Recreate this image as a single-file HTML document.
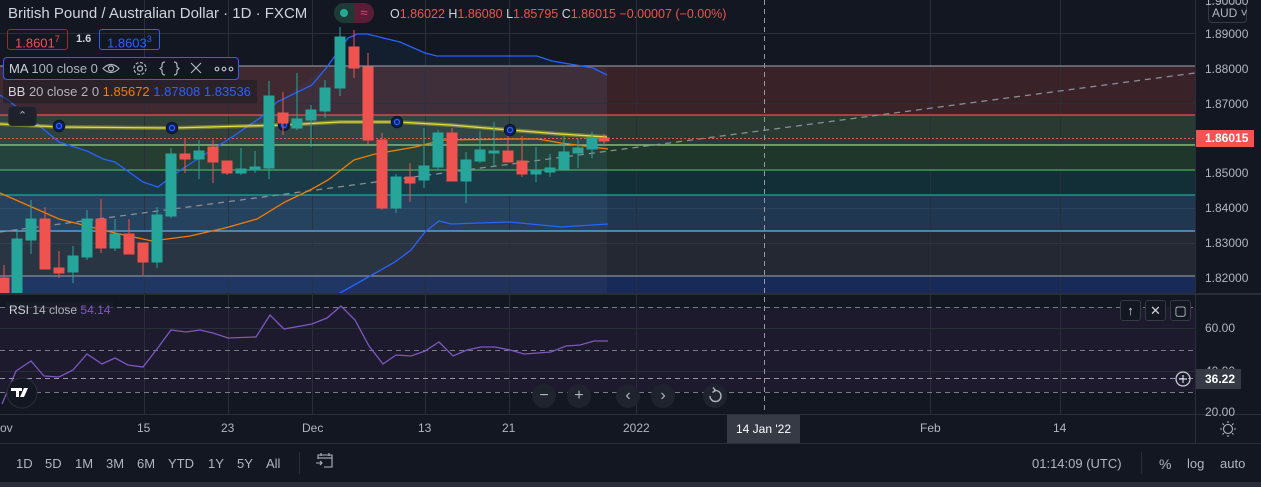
<!DOCTYPE html>
<html><head><meta charset="utf-8"><style>
*{margin:0;padding:0;box-sizing:border-box}
body{width:1261px;height:487px;background:#131722;overflow:hidden;position:relative;font-family:"Liberation Sans",sans-serif;color:#b2b5be}
.a{position:absolute;white-space:nowrap}
.pl{position:absolute;left:1205px;font-size:12px;color:#b2b5be}
.tl{position:absolute;top:421px;font-size:12px;color:#b2b5be}
.tb{position:absolute;top:456px;font-size:13px;color:#b2b5be}
.r{color:#ef5350}
.nb{position:absolute;top:384px;width:24px;height:24px;border-radius:50%;background:#1f232e;color:#b2b5be;font-size:16px;text-align:center;line-height:23px}
.sb{position:absolute;top:300px;width:21px;height:21px;border:1px solid #363a45;border-radius:3px;background:#131722;color:#d1d4dc;font-size:13px;text-align:center;line-height:19px}
</style></head><body>
<svg class="a" style="left:0;top:0" width="1261" height="487">
<rect x="0" y="66" width="1195" height="49" fill="#3a2229"/>
<rect x="0" y="115" width="1195" height="30" fill="#2a3a33"/>
<rect x="0" y="145" width="1195" height="25" fill="#1f372b"/>
<rect x="0" y="170" width="1195" height="25" fill="#122e36"/>
<rect x="0" y="195" width="1195" height="36" fill="#1f3750"/>
<rect x="0" y="231" width="1195" height="45" fill="#242832"/>
<rect x="0" y="276" width="1195" height="17" fill="#182a57"/>
<rect x="0" y="66" width="607" height="227" fill="rgba(255,255,255,0.035)"/>
<g stroke="#2a2e39" stroke-width="1">
<line x1="0" y1="33.5" x2="1195" y2="33.5"/><line x1="0" y1="103.5" x2="1195" y2="103.5"/><line x1="0" y1="208.5" x2="1195" y2="208.5" stroke="rgba(255,255,255,0.06)"/><line x1="0" y1="243.5" x2="1195" y2="243.5" stroke="rgba(255,255,255,0.06)"/>
<line x1="144.5" y1="0" x2="144.5" y2="414"/><line x1="228.5" y1="0" x2="228.5" y2="414"/><line x1="312.5" y1="0" x2="312.5" y2="414"/><line x1="425.5" y1="0" x2="425.5" y2="414"/><line x1="509.5" y1="0" x2="509.5" y2="414"/><line x1="636.5" y1="0" x2="636.5" y2="414"/><line x1="930.5" y1="0" x2="930.5" y2="414"/><line x1="1060.5" y1="0" x2="1060.5" y2="414"/>
</g>
<g stroke-width="1.3">
<line x1="0" y1="66" x2="1195" y2="66" stroke="#8a8d96"/>
<line x1="0" y1="115" x2="1195" y2="115" stroke="#e5534b"/>
<line x1="0" y1="145" x2="1195" y2="145" stroke="#9ad38a"/>
<line x1="0" y1="170" x2="1195" y2="170" stroke="#4caf50"/>
<line x1="0" y1="195" x2="1195" y2="195" stroke="#26a69a"/>
<line x1="0" y1="231" x2="1195" y2="231" stroke="#64b5f6"/>
<line x1="0" y1="276" x2="1195" y2="276" stroke="#8a8d96"/>
</g>
<polygon fill="rgba(33,150,243,0.06)" points="0,95 30,118 59,142 87,151 115,162 143,182 158,187 182,169 229,139 277,102 327,67 348,38 367,33 400,42 425,53 437,56 537,56 552,61 593,68 607,75 607,224 561,227 510,222 451,224 439,221 425,232 411,250 395,262 340,293 0,293"/>
<line x1="0" y1="232" x2="1195" y2="73" stroke="#8a8d96" stroke-width="1.3" stroke-dasharray="6,5"/>
<line x1="0" y1="138.5" x2="1195" y2="138.5" stroke="#ef5350" stroke-width="1" stroke-dasharray="2,2"/>
<polyline fill="none" stroke="#2962ff" stroke-width="1.3" points="0,95 8,100 30,118 59,142 87,151 103,159 115,162 143,182 158,187 182,169 229,139 260,118 277,102 312,85 327,67 337,53 348,38 357,34 367,34 400,42 425,53 437,56 537,56 552,61 593,68 607,75"/>
<polyline fill="none" stroke="#2962ff" stroke-width="1.3" points="320,302 340,293 395,262 411,250 425,232 439,221 451,224 510,222 561,227 608,224"/>
<polyline fill="none" stroke="#f57c00" stroke-width="1.3" points="0,193 59,219 79,224 115,233 152,241 190,236 225,228 257,219 285,202 312,189 328,180 354,160 375,154 415,147 443,140 514,139 538,139 561,143 608,149"/>
<polyline fill="none" stroke="rgba(230,220,60,0.35)" stroke-width="4" points="0,124 60,127 172,128 284,125 340,122 397,122 450,125 510,130 560,134 607,137"/>
<polyline fill="none" stroke="#e6dc3c" stroke-width="1.3" points="0,124 60,127 172,128 284,125 340,122 397,122 450,125 510,130 560,134 607,137"/>
<g fill="#0c1f6e" stroke="#131722" stroke-width="1.5"><circle cx="59" cy="126" r="5.5"/><circle cx="172" cy="128" r="5.5"/><circle cx="284" cy="125" r="5.5"/><circle cx="397" cy="122" r="5.5"/><circle cx="510" cy="130" r="5.5"/></g>
<g fill="none" stroke="#2962ff" stroke-width="1.2"><circle cx="59" cy="126" r="2.5"/><circle cx="172" cy="128" r="2.5"/><circle cx="284" cy="125" r="2.5"/><circle cx="397" cy="122" r="2.5"/><circle cx="510" cy="130" r="2.5"/></g>
<g stroke-width="1">
<g fill="#ef5350" stroke="#ef5350">
<line x1="4" y1="265" x2="4" y2="293"/><rect x="-1" y="278" width="10" height="15"/>
<line x1="45" y1="207" x2="45" y2="269"/><rect x="40" y="219" width="10" height="50"/>
<line x1="59" y1="251" x2="59" y2="278"/><rect x="54" y="268" width="10" height="5"/>
<line x1="101" y1="199" x2="101" y2="253"/><rect x="96" y="219" width="10" height="29"/>
<line x1="129" y1="219" x2="129" y2="254"/><rect x="124" y="234" width="10" height="20"/>
<line x1="143" y1="243" x2="143" y2="275"/><rect x="138" y="243" width="10" height="19"/>
<line x1="185" y1="139" x2="185" y2="173"/><rect x="180" y="154" width="10" height="5"/>
<line x1="213" y1="140" x2="213" y2="183"/><rect x="208" y="147" width="10" height="15"/>
<line x1="227" y1="161" x2="227" y2="175"/><rect x="222" y="161" width="10" height="12"/>
<line x1="283" y1="92" x2="283" y2="135"/><rect x="278" y="113" width="10" height="10"/>
<line x1="354" y1="30" x2="354" y2="78"/><rect x="349" y="47" width="10" height="21"/>
<line x1="368" y1="53" x2="368" y2="145"/><rect x="363" y="67" width="10" height="73"/>
<line x1="382" y1="133" x2="382" y2="210"/><rect x="377" y="140" width="10" height="68"/>
<line x1="410" y1="163" x2="410" y2="202"/><rect x="405" y="177" width="10" height="6"/>
<line x1="452" y1="128" x2="452" y2="181"/><rect x="447" y="133" width="10" height="48"/>
<line x1="508" y1="136" x2="508" y2="162"/><rect x="503" y="151" width="10" height="11"/>
<line x1="522" y1="136" x2="522" y2="177"/><rect x="517" y="161" width="10" height="13"/>
<line x1="604" y1="134" x2="604" y2="146"/><rect x="599" y="138" width="10" height="3"/>
</g>
<g fill="#26a69a" stroke="#26a69a">
<line x1="17" y1="229" x2="17" y2="293"/><rect x="12" y="239" width="10" height="54"/>
<line x1="31" y1="200" x2="31" y2="254"/><rect x="26" y="219" width="10" height="21"/>
<line x1="73" y1="246" x2="73" y2="283"/><rect x="68" y="256" width="10" height="16"/>
<line x1="87" y1="210" x2="87" y2="260"/><rect x="82" y="219" width="10" height="38"/>
<line x1="115" y1="219" x2="115" y2="251"/><rect x="110" y="234" width="10" height="14"/>
<line x1="157" y1="207" x2="157" y2="268"/><rect x="152" y="215" width="10" height="47"/>
<line x1="171" y1="148" x2="171" y2="218"/><rect x="166" y="154" width="10" height="62"/>
<line x1="199" y1="140" x2="199" y2="179"/><rect x="194" y="151" width="10" height="8"/>
<line x1="241" y1="148" x2="241" y2="175"/><rect x="236" y="169" width="10" height="4"/>
<line x1="255" y1="151" x2="255" y2="173"/><rect x="250" y="167" width="10" height="3"/>
<line x1="269" y1="81" x2="269" y2="179"/><rect x="264" y="96" width="10" height="72"/>
<line x1="297" y1="73" x2="297" y2="130"/><rect x="292" y="119" width="10" height="9"/>
<line x1="311" y1="105" x2="311" y2="147"/><rect x="306" y="110" width="10" height="10"/>
<line x1="325" y1="80" x2="325" y2="118"/><rect x="320" y="88" width="10" height="23"/>
<line x1="340" y1="27" x2="340" y2="96"/><rect x="335" y="37" width="10" height="51"/>
<line x1="396" y1="174" x2="396" y2="213"/><rect x="391" y="177" width="10" height="31"/>
<line x1="424" y1="128" x2="424" y2="188"/><rect x="419" y="166" width="10" height="14"/>
<line x1="438" y1="130" x2="438" y2="170"/><rect x="433" y="133" width="10" height="34"/>
<line x1="466" y1="152" x2="466" y2="203"/><rect x="461" y="160" width="10" height="21"/>
<line x1="480" y1="131" x2="480" y2="163"/><rect x="475" y="150" width="10" height="11"/>
<line x1="494" y1="122" x2="494" y2="167"/><rect x="489" y="151" width="10" height="2"/>
<line x1="536" y1="147" x2="536" y2="182"/><rect x="531" y="170" width="10" height="4"/>
<line x1="550" y1="154" x2="550" y2="177"/><rect x="545" y="168" width="10" height="4"/>
<line x1="564" y1="136" x2="564" y2="169"/><rect x="559" y="152" width="10" height="17"/>
<line x1="578" y1="139" x2="578" y2="168"/><rect x="573" y="148" width="10" height="5"/>
<line x1="592" y1="132" x2="592" y2="158"/><rect x="587" y="138" width="10" height="11"/>
</g></g>
<rect x="0" y="293" width="1261" height="2" fill="#2a2e39"/>
<rect x="0" y="295" width="1195" height="119" fill="#131722"/>
<rect x="0" y="307" width="1195" height="85" fill="#1c1a2c"/>
<g stroke="#2a2e39"><line x1="0" y1="328.5" x2="1195" y2="328.5"/><line x1="0" y1="371.5" x2="1195" y2="371.5"/>
<line x1="144.5" y1="295" x2="144.5" y2="414"/><line x1="228.5" y1="295" x2="228.5" y2="414"/><line x1="312.5" y1="295" x2="312.5" y2="414"/><line x1="425.5" y1="295" x2="425.5" y2="414"/><line x1="509.5" y1="295" x2="509.5" y2="414"/><line x1="636.5" y1="295" x2="636.5" y2="414"/><line x1="930.5" y1="295" x2="930.5" y2="414"/><line x1="1060.5" y1="295" x2="1060.5" y2="414"/></g>
<g stroke="#787b86" stroke-dasharray="5,4"><line x1="0" y1="307.5" x2="1195" y2="307.5"/><line x1="0" y1="350.5" x2="1195" y2="350.5"/><line x1="0" y1="392.5" x2="1195" y2="392.5"/></g>
<polyline fill="none" stroke="#7e57c2" stroke-width="1.3" points="2,404 16,371 31,361 44,376 59,377 73,370 87,354 102,364 115,358 128,365 143,367 157,349 171,330 186,332 200,330 213,333 228,338 256,337 270,315 284,329 312,324 327,318 341,306 355,320 369,346 383,364 396,355 411,356 425,351 439,342 453,356 467,350 481,347 495,347 510,350 524,354 538,353 551,352 566,346 580,345 594,341 608,341"/>
<line x1="764.5" y1="0" x2="764.5" y2="414" stroke="#9598a1" stroke-dasharray="5,4"/>
<line x1="0" y1="378.5" x2="1195" y2="378.5" stroke="#9598a1" stroke-dasharray="5,4"/>
<rect x="1195" y="0" width="1" height="443" fill="#2a2e39"/>
<rect x="0" y="414" width="1261" height="1" fill="#2a2e39"/>
<rect x="0" y="443" width="1261" height="1" fill="#2a2e39"/>
<rect x="0" y="482" width="1261" height="5" fill="#2a2e39"/>
<rect x="1141" y="452" width="1" height="22" fill="#2a2e39"/>
<rect x="299" y="452" width="1" height="22" fill="#2a2e39"/>
<circle cx="22" cy="393" r="15" fill="#131722" stroke="#2a2e39"/>
<path d="M11 388h8v9h-3v-6h-5z M19 388h3v3h-3z M24 388h4l-4 9h-4z" fill="#fff"/>
<g fill="none" stroke="#b2b5be" stroke-width="1.1"><path d="M318 459v-4h14v12h-8"/><line x1="318" y1="458" x2="332" y2="458"/><line x1="321" y1="453" x2="321" y2="456"/><line x1="329" y1="453" x2="329" y2="456"/><path d="M316 463h6m-2-2l2 2-2 2"/></g>
<g fill="none" stroke="#b2b5be" stroke-width="1.1"><circle cx="1228" cy="429" r="4.5"/><path d="M1228 421v2M1228 435v2M1220 429h2M1234 429h2M1222.5 423.5l1.4 1.4M1232.1 433.1l1.4 1.4M1222.5 434.5l1.4-1.4M1232.1 424.9l1.4-1.4"/></g>
<circle cx="1183" cy="379" r="7" fill="none" stroke="#d1d4dc" stroke-width="1.2"/><path d="M1179 379h8M1183 375v8" stroke="#d1d4dc" stroke-width="1.2"/>
</svg>

<div class="a" style="left:8px;top:5px;font-size:15px;color:#d1d4dc">British Pound / Australian Dollar · 1D · FXCM</div>
<div class="a" style="left:334px;top:3px;width:40px;height:20px;border-radius:10px;overflow:hidden;background:#1e3a36">
 <div class="a" style="left:6px;top:6px;width:8px;height:8px;border-radius:50%;background:#22ab94"></div>
 <div class="a" style="left:20px;top:0;width:20px;height:20px;background:#5b1c35;color:#e0497a;font-size:13px;text-align:center;line-height:20px">≈</div>
</div>
<div class="a" style="left:390px;top:7px;font-size:12.5px;color:#d1d4dc">O<span class="r">1.86022</span> H<span class="r">1.86080</span> L<span class="r">1.85795</span> C<span class="r">1.86015</span> <span class="r">−0.00007 (−0.00%)</span></div>
<div class="a" style="left:7px;top:29px;width:61px;height:21px;border:1px solid #9c2a2f;border-radius:3px;font-size:13px;color:#ef5350;line-height:19px;padding-left:7px">1.8601<sup style="font-size:9px">7</sup></div>
<div class="a" style="left:76px;top:33px;font-size:11px;color:#d1d4dc;font-weight:bold">1.6</div>
<div class="a" style="left:99px;top:29px;width:61px;height:21px;border:1px solid #2962ff;border-radius:3px;font-size:13px;color:#2962ff;line-height:19px;padding-left:7px">1.8603<sup style="font-size:9px">3</sup></div>
<div class="a" style="left:3px;top:57px;width:236px;height:23px;border:1px solid #2962ff;border-radius:4px;background:#131722;font-size:13px;color:#b2b5be;line-height:21px;padding-left:5px"><span style="color:#d1d4dc">MA</span> 100 close 0</div>
<svg class="a" style="left:100px;top:58px" width="140" height="21"><g fill="none" stroke="#b2b5be" stroke-width="1.2"><path d="M3 10.5q8-8 16 0q-8 8-16 0z"/><circle cx="11" cy="10.5" r="2.5"/><circle cx="40" cy="10.5" r="2.5"/><circle cx="40" cy="10.5" r="6" stroke-dasharray="3,1.7"/><path d="M65 4q-3 0-3 3v2l-2 1.5 2 1.5v2q0 3 3 3M74 4q3 0 3 3v2l2 1.5-2 1.5v2q0 3-3 3"/><path d="M91 5l10 10M101 5l-10 10"/><circle cx="117" cy="11" r="1.8"/><circle cx="124" cy="11" r="1.8"/><circle cx="131" cy="11" r="1.8"/></g></svg>
<div class="a" style="left:3px;top:80px;width:254px;height:23px;background:rgba(25,27,36,0.55);font-size:13px;color:#b2b5be;line-height:23px;padding-left:5px"><span style="color:#d1d4dc">BB</span> 20 close 2 0 <span style="color:#f57c00">1.85672</span> <span style="color:#2962ff">1.87808</span> <span style="color:#2962ff">1.83536</span></div>
<div class="a" style="left:8px;top:106px;width:29px;height:20px;border-radius:4px;background:#1e222d;border:1px solid #2a2e39;color:#b2b5be;font-size:11px;text-align:center;line-height:18px">⌃</div>
<div class="a" style="left:6px;top:302px;font-size:12px;color:#b2b5be;background:rgba(30,30,45,0.6);padding:1px 3px"><span style="color:#d1d4dc">RSI</span> 14 close <span style="color:#7e57c2">54.14</span></div>

<div class="a" style="left:1208px;top:3px;width:39px;height:20px;border:1px solid #363a45;border-radius:4px;font-size:12px;color:#b2b5be;line-height:18px;padding-left:3px">AUD ˅</div>
<div class="pl" style="top:-6px">1.90000</div>
<div class="pl" style="top:27px">1.89000</div>
<div class="pl" style="top:62px">1.88000</div>
<div class="pl" style="top:97px">1.87000</div>
<div class="pl" style="top:166px">1.85000</div>
<div class="pl" style="top:201px">1.84000</div>
<div class="pl" style="top:236px">1.83000</div>
<div class="pl" style="top:271px">1.82000</div>
<div class="a" style="left:1196px;top:130px;width:58px;height:17px;background:#f05350;color:#fff;font-size:12px;font-weight:bold;line-height:17px;padding-left:9px">1.86015</div>
<div class="pl" style="top:321px">60.00</div>
<div class="pl" style="top:364px">40.00</div>
<div class="pl" style="top:405px">20.00</div>
<div class="a" style="left:1196px;top:369px;width:45px;height:20px;background:#363a45;color:#fff;font-size:12px;font-weight:bold;line-height:20px;padding-left:9px">36.22</div>
<div class="sb" style="left:1120px">↑</div>
<div class="sb" style="left:1145px">✕</div>
<div class="sb" style="left:1170px">▢</div>

<div class="nb" style="left:532px">−</div>
<div class="nb" style="left:567px">+</div>
<div class="nb" style="left:616px">‹</div>
<div class="nb" style="left:651px">›</div>
<div class="a" style="left:703px;top:384px;width:24px;height:24px;border-radius:50%;background:#1f232e"></div>
<svg class="a" style="left:703px;top:384px" width="24" height="24"><path d="M7 12a5.5 5.5 0 1 0 4-5.3" fill="none" stroke="#b2b5be" stroke-width="1.4"/><path d="M10 3.5l2.5 3-3 2" fill="none" stroke="#b2b5be" stroke-width="1.4"/></svg>

<div class="tl" style="left:0">ov</div>
<div class="tl" style="left:137px">15</div>
<div class="tl" style="left:221px">23</div>
<div class="tl" style="left:302px">Dec</div>
<div class="tl" style="left:418px">13</div>
<div class="tl" style="left:502px">21</div>
<div class="tl" style="left:623px">2022</div>
<div class="tl" style="left:920px">Feb</div>
<div class="tl" style="left:1053px">14</div>
<div class="a" style="left:727px;top:415px;width:73px;height:28px;background:#363a45;color:#fff;font-size:12px;line-height:28px;text-align:center">14 Jan '22</div>

<div class="tb" style="left:16px">1D</div>
<div class="tb" style="left:45px">5D</div>
<div class="tb" style="left:75px">1M</div>
<div class="tb" style="left:106px">3M</div>
<div class="tb" style="left:137px">6M</div>
<div class="tb" style="left:168px">YTD</div>
<div class="tb" style="left:208px">1Y</div>
<div class="tb" style="left:237px">5Y</div>
<div class="tb" style="left:266px">All</div>
<div class="tb" style="left:1032px">01:14:09 (UTC)</div>
<div class="tb" style="left:1159px;font-size:14px">%</div>
<div class="tb" style="left:1187px">log</div>
<div class="tb" style="left:1220px">auto</div>
</body></html>
